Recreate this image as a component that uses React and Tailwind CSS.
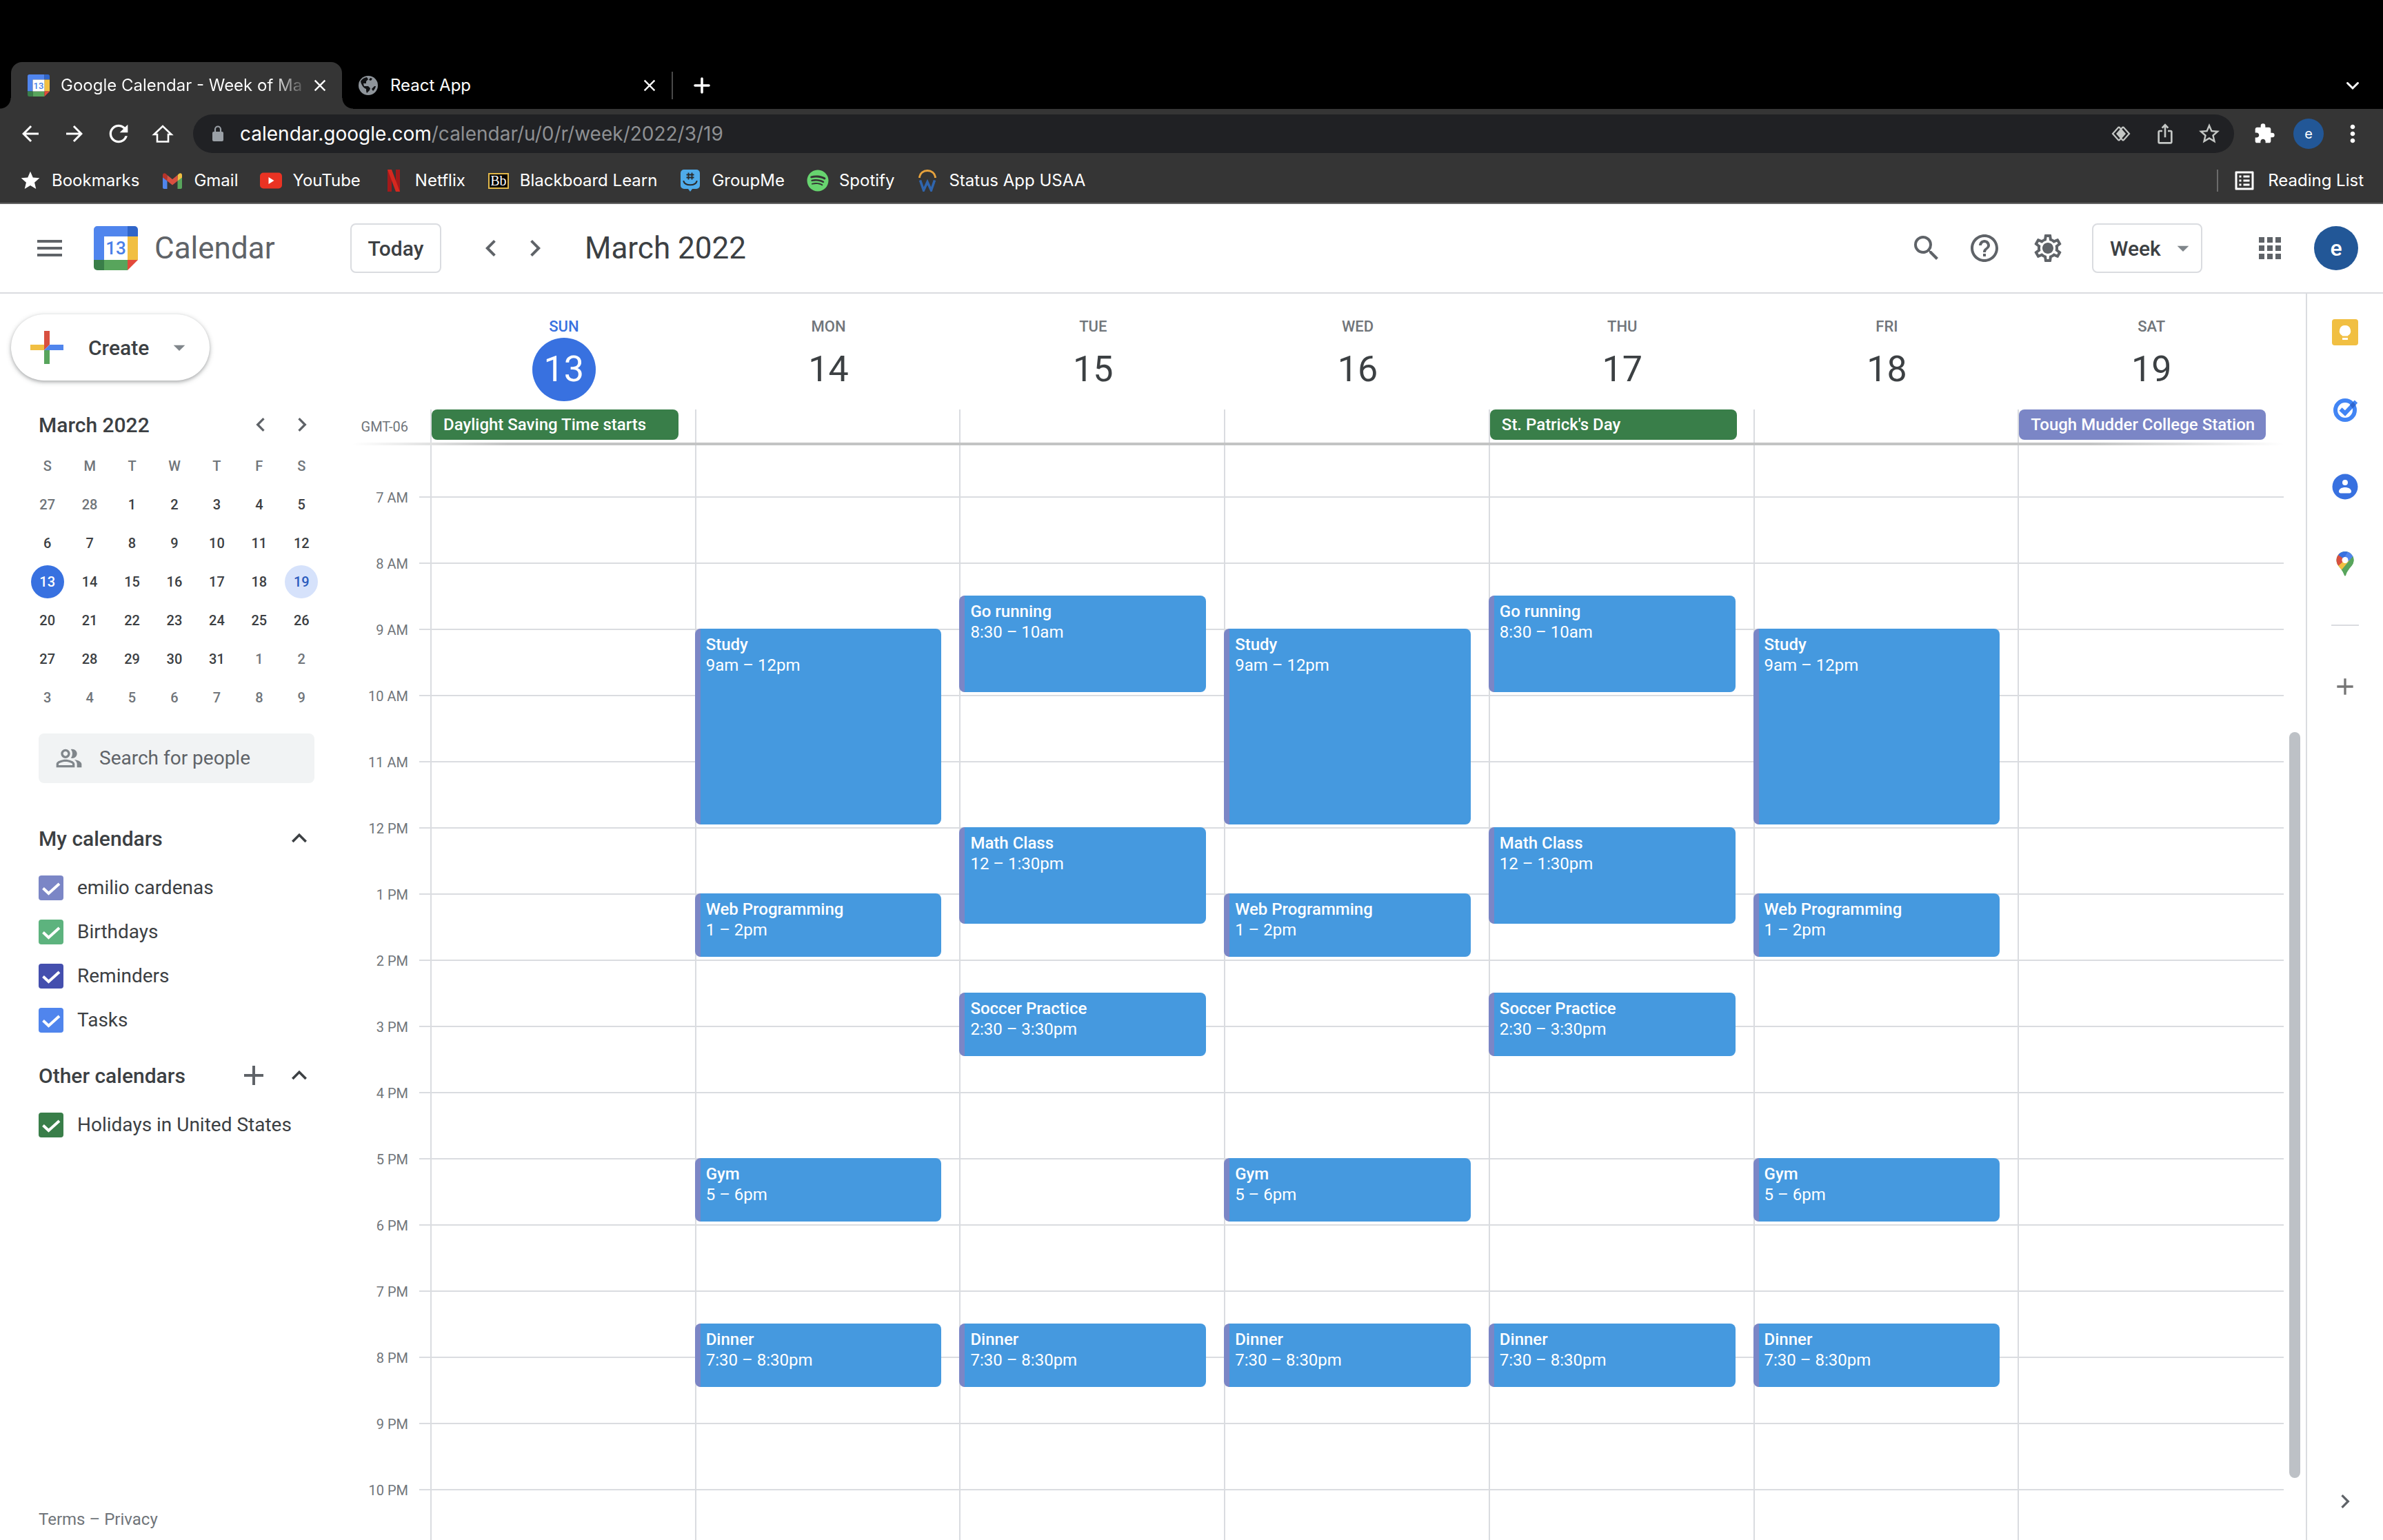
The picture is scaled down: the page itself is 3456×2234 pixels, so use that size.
import React from "react";
import { MdOutlineSettings, MdHelpOutline, MdSearch, MdMenu, MdApps, MdChevronLeft, MdChevronRight, MdExpandLess, MdExpandMore, MdArrowDropDown, MdAdd, MdOutlinePeopleAlt, MdArrowBack, MdArrowForward, MdRefresh, MdStar, MdStarBorder, MdExtension, MdMoreVert, MdClose, MdOutlineIosShare, MdOutlineListAlt } from "react-icons/md";
import { FaSpotify } from "react-icons/fa";

const GmailIcon = () => (
  <svg viewBox="0 0 32 32" className="size-8" aria-hidden="true">
    <path d="M2 8v18a2 2 0 0 0 2 2h4.500V13z" fill="#5086ec" />
    <path d="M30 8v18a2 2 0 0 1-2 2h-4.500V13z" fill="#58a55c" />
    <path d="M23.500 8l2.300-2.200C28 4.200 30 5.700 30 8v3.500l-6.500 5z" fill="#f1bf42" />
    <path d="M8.500 8L6.200 5.800C4 4.200 2 5.700 2 8v3.500l6.500 5z" fill="#b5332a" />
    <path d="M8.500 8l7.500 6 7.500-6v8.500L16 22.500l-7.500-6z" fill="#d85040" />
  </svg>
);
const YouTubeIcon = () => (
  <svg viewBox="0 0 32 32" className="size-8" aria-hidden="true">
    <rect x="0" y="4.500" width="32" height="23" rx="5" fill="#ea3323" />
    <path d="M12.500 11v10l8-5z" fill="#fff" />
  </svg>
);
const NetflixIcon = () => (
  <svg viewBox="0 0 32 32" className="size-8" aria-hidden="true">
    <path d="M7 0h6v32H7z M19 0h6v32h-6z" fill="#a3191a" />
    <path d="M7 0h6l12 32h-6z" fill="#d6281f" />
  </svg>
);
const BlackboardIcon = () => (
  <span className="flex size-8 items-center justify-center" aria-hidden="true">
    <span className="flex h-[23px] w-[30px] items-center justify-center border-2 border-[#e2b84a] bg-black font-['Liberation_Serif',serif] text-[20px] leading-none text-white">Bb</span>
  </span>
);
const GroupMeIcon = () => (
  <svg viewBox="0 0 32 32" className="size-8" aria-hidden="true">
    <path d="M7 0h18a5 5 0 0 1 5 5v18a5 5 0 0 1-5 5h-6l-3 4-3-4H7a5 5 0 0 1-5-5V5a5 5 0 0 1 5-5z" fill="#4fabea" />
    <path d="M13.500 4.500v10M18.500 4.500v10M10.500 7.500h11M10.500 11.500h11" stroke="#2b2b2b" strokeWidth="1.800" fill="none" />
    <path d="M6.500 17c2 7 17 7 19 0" stroke="#2b2b2b" strokeWidth="2.200" fill="none" strokeLinecap="round" />
  </svg>
);
const StatusIcon = () => (
  <svg viewBox="0 0 32 32" className="size-8" fill="none" aria-hidden="true">
    <path d="M4.500 12C5-2 27-2 27.500 12" stroke="#e8a33d" strokeWidth="2.800" />
    <path d="M5.500 15.500l5 14.500L16 18l5.500 12 5-14.500" stroke="#2f65ae" strokeWidth="3.600" />
  </svg>
);
const LensIcon = () => (
  <svg viewBox="0 0 28 24" className="h-6 w-7" fill="none" stroke="#c4c7c5" strokeWidth="2.200" aria-hidden="true">
    <path d="M11 2L2 12l9 10M17 2l9 10-9 10" />
    <path d="M14 4l7 8-7 8-7-8z" fill="#c4c7c5" stroke="none" />
    <path d="M17 2l-3 3.500L11 2M11 22l3-3.500 3 3.500" />
  </svg>
);
const GlobeIcon = () => (
  <svg viewBox="0 0 32 32" className="size-8" aria-hidden="true">
    <circle cx="16" cy="16" r="14" fill="#8f959b" />
    <path d="M5 10c2-3 5-5.500 9-6l2 3-3 3v3H9l1 4h6l3 3-1 3-4 4c-1-2-1-4-1-6-3-1-7-5-8-11z" fill="#101113" />
    <path d="M18 8l4-2c3 2 5 5 5.500 8L24 15l-3-1-1-3-3-1z" fill="#8f959b" />
    <path d="M19 5l3 1-2 3-3-1zM25 17l2 0c-.5 3-2 5-4 7l-2-3z" fill="#101113" />
  </svg>
);
const LockIcon = () => (
  <svg viewBox="0 0 32 32" className="size-8" fill="none" aria-hidden="true">
    <rect x="8" y="13" width="16" height="14" rx="2" fill="#9aa0a6" />
    <path d="M12 13v-3.500a4 4 0 0 1 8 0V13" stroke="#9aa0a6" strokeWidth="2.200" />
  </svg>
);
const HomeIcon = () => (
  <svg viewBox="0 0 32 32" className="size-8" fill="none" stroke="#fff" strokeWidth="2.600" aria-hidden="true">
    <path d="M3.500 17L16 5l12.500 12H24v10.500H8V17z" />
  </svg>
);
const NewTabIcon = () => (
  <svg viewBox="0 0 32 32" className="size-8" fill="none" stroke="#fff" strokeWidth="3.600" strokeLinecap="round" aria-hidden="true">
    <path d="M16 6v20M6 16h20" />
  </svg>
);
const ChevronDown = () => (
  <svg viewBox="0 0 32 32" className="size-8" fill="none" stroke="#fff" strokeWidth="3" strokeLinecap="round" aria-hidden="true">
    <path d="M8.500 12.500l7.500 7.500 7.500-7.500" />
  </svg>
);
const CheckIcon = () => (
  <svg viewBox="0 0 36 36" className="pointer-events-none absolute inset-0 size-9" fill="none" stroke="#fff" strokeWidth="4" aria-hidden="true">
    <path d="M6.500 18.500L14.500 26 30 12" />
  </svg>
);
const GearIcon = () => (
  <svg viewBox="0 0 24 24" className="size-12" fill="currentColor" aria-hidden="true">
    <MdOutlineSettings size={24} />
    <circle cx="12" cy="12" r="3.300" />
  </svg>
);
const CalendarLogo = ({ className }) => (
  <svg viewBox="0 0 64 64" className={className} aria-hidden="true">
    <path d="M5 0h44v15H15v34H0V5a5 5 0 0 1 5-5z" fill="#5085ed" />
    <path d="M49 0h10a5 5 0 0 1 5 5v10H49z" fill="#3065c8" />
    <path d="M49 15h15v34H49z" fill="#f1bf42" />
    <path d="M15 49h34v15H15z" fill="#58a55c" />
    <path d="M0 49h15v15H5a5 5 0 0 1-5-5z" fill="#397e49" />
    <path d="M49 49h15L49 64z" fill="#e3493a" />
    <path d="M15 15h34v34H15z" fill="#fff" />
    <text x="32" y="41" textAnchor="middle" fontSize="26" fontWeight="500" fontFamily="Roboto, sans-serif" fill="#4a80e8">13</text>
  </svg>
);
const CreatePlus = () => (
  <svg viewBox="0 0 48 48" className="size-12" aria-hidden="true">
    <path d="M20 0h8v20l-8 8z" fill="#d85040" />
    <path d="M0 20h20v8H0z" fill="#f1bf42" />
    <path d="M20 28h8v20h-8z" fill="#58a55c" />
    <path d="M28 20h20v8H20z" fill="#5085ed" />
  </svg>
);
const KeepIcon = () => (
  <svg viewBox="0 0 40 40" className="size-10" aria-hidden="true">
    <rect x="1" y="1" width="38" height="38" rx="4" fill="#f1bf42" />
    <path d="M20 10a8 8 0 0 1 4 15v.5h-8V25a8 8 0 0 1 4-15z" fill="#fff" />
    <rect x="16" y="28" width="8" height="3" fill="#fff" />
  </svg>
);
const TasksIcon = () => (
  <svg viewBox="0 0 40 40" className="size-10" fill="none" aria-hidden="true">
    <circle cx="20" cy="21" r="14" stroke="#4285f4" strokeWidth="6" />
    <path d="M13.500 19.500l6.500 6L36 8.500" stroke="#4285f4" strokeWidth="6" />
    <path d="M27 13.500l4.500-4.500 4 4.500-4.500 5z" fill="#2f66cf" />
  </svg>
);
const ContactsIcon = () => (
  <svg viewBox="0 0 40 40" className="size-10" aria-hidden="true">
    <circle cx="20" cy="20" r="18.500" fill="#3871e0" />
    <circle cx="20" cy="14" r="4" fill="#fff" />
    <path d="M11 27c0-8 18-8 18 0 0 1.500-1 2.500-2.500 2.500h-13c-1.500 0-2.500-1-2.500-2.500z" fill="#fff" />
  </svg>
);
const MapsIcon = () => (
  <svg viewBox="0 0 40 40" className="size-10" aria-hidden="true">
    <clipPath id="pin"><path d="M20 2a12.500 12.500 0 0 1 12.500 12.500c0 6-3.500 9-7 13.500-3 4-3.500 6-4.300 8.500-.4 1.400-2 1.400-2.400 0-.8-2.500-1.300-4.500-4.300-8.500-3.500-4.500-7-7.500-7-13.500A12.500 12.500 0 0 1 20 2z" /></clipPath>
    <g clipPath="url(#pin)">
      <path d="M0 0h40v40H0z" fill="#58a55c" />
      <path d="M6 23L20 6l8 8L13 32z" fill="#f1bf42" />
      <path d="M4 24V4h7l9 10-10 9z" fill="#d85040" />
      <path d="M10 7l4-7h14l-8 14z" fill="#3871e0" />
      <path d="M25 1l10 6-3 4-12 8-2-7z" fill="#5085ed" />
      <path d="M34 6v12L15 38l-2-7 20-24z" fill="#58a55c" />
      <path d="M20 14L13 30l-2-3 9-10z" fill="#f1bf42" />
    </g>
    <circle cx="20" cy="14.500" r="4.500" fill="#fff" />
  </svg>
);

const bookmarks = [
  ["Bookmarks", <MdStar key="i" className="size-8 text-white" />],
  ["Gmail", <GmailIcon key="i" />],
  ["YouTube", <YouTubeIcon key="i" />],
  ["Netflix", <NetflixIcon key="i" />],
  ["Blackboard Learn", <BlackboardIcon key="i" />],
  ["GroupMe", <GroupMeIcon key="i" />],
  ["Spotify", <FaSpotify key="i" className="size-8 text-[#67d46f]" />],
  ["Status App USAA", <StatusIcon key="i" />],
];

const weeks = [
  [27, 28, 1, 2, 3, 4, 5],
  [6, 7, 8, 9, 10, 11, 12],
  [13, 14, 15, 16, 17, 18, 19],
  [20, 21, 22, 23, 24, 25, 26],
  [27, 28, 29, 30, 31, 1, 2],
  [3, 4, 5, 6, 7, 8, 9],
];

const mwf = [
  ["Study", "9am – 12pm", 9, 12],
  ["Web Programming", "1 – 2pm", 13, 14],
  ["Gym", "5 – 6pm", 17, 18],
  ["Dinner", "7:30 – 8:30pm", 19.5, 20.5],
];
const tth = [
  ["Go running", "8:30 – 10am", 8.5, 10],
  ["Math Class", "12 – 1:30pm", 12, 13.5],
  ["Soccer Practice", "2:30 – 3:30pm", 14.5, 15.5],
  ["Dinner", "7:30 – 8:30pm", 19.5, 20.5],
];
const days = [
  { name: "SUN", date: 13, today: true, allDay: "Daylight Saving Time starts", color: "bg-[#397e49]", events: [] },
  { name: "MON", date: 14, events: mwf },
  { name: "TUE", date: 15, events: tth },
  { name: "WED", date: 16, events: mwf },
  { name: "THU", date: 17, allDay: "St. Patrick's Day", color: "bg-[#397e49]", events: tth },
  { name: "FRI", date: 18, events: mwf },
  { name: "SAT", date: 19, allDay: "Tough Mudder College Station", color: "bg-[#7b86c6]", events: [] },
];
const hours = ["7 AM", "8 AM", "9 AM", "10 AM", "11 AM", "12 PM", "1 PM", "2 PM", "3 PM", "4 PM", "5 PM", "6 PM", "7 PM", "8 PM", "9 PM", "10 PM"];
const HOUR = 96;
const FIRST = 74;

function IconButton({ label, children, className = "size-16" }) {
  return (
    <button type="button" aria-label={label} className={`flex shrink-0 items-center justify-center ${className}`}>
      {children}
    </button>
  );
}

function Browser() {
  return (
    <div className="bg-[#353535] font-[Inter,sans-serif] text-white">
      <div className="flex h-[158px] items-end bg-black pl-4">
        <div className="relative flex h-[68px] w-[480px] items-center rounded-t-2xl bg-[#353535] pr-4 pl-6">
          <span className="absolute bottom-0 -left-4 size-4 bg-[radial-gradient(circle_at_0_0,#000_15px,#353535_16px)]" />
          <span className="absolute -right-4 bottom-0 size-4 bg-[radial-gradient(circle_at_100%_0,#000_15px,#353535_16px)]" />
          <CalendarLogo className="size-8 shrink-0" />
          <span className="ml-4 flex-1 bg-linear-to-r from-white from-85% to-transparent bg-clip-text text-[24px] whitespace-nowrap text-transparent">Google Calendar - Week of Ma</span>
          <IconButton label="Close tab" className="size-8"><MdClose className="size-7" /></IconButton>
        </div>
        <div className="flex h-[68px] w-[478px] items-center pr-4 pl-[22px]">
          <GlobeIcon />
          <span className="ml-4 flex-1 text-[24px]">React App</span>
          <IconButton label="Close tab" className="size-8"><MdClose className="size-7" /></IconButton>
        </div>
        <div className="flex h-[68px] flex-1 items-center justify-between pr-7">
          <div className="flex h-10 items-center border-l-2 border-[#4a4a4a] pl-[26px]">
            <IconButton label="New tab" className="size-8"><NewTabIcon /></IconButton>
          </div>
          <IconButton label="Search tabs" className="size-8"><ChevronDown /></IconButton>
        </div>
      </div>
      <div className="flex h-[72px] items-center px-7">
        <div className="flex gap-8 pr-7">
          <IconButton label="Back" className="size-8"><MdArrowBack className="size-9 shrink-0" /></IconButton>
          <IconButton label="Forward" className="size-8"><MdArrowForward className="size-9 shrink-0" /></IconButton>
          <IconButton label="Reload" className="size-8"><MdRefresh className="size-10 shrink-0" /></IconButton>
          <IconButton label="Home" className="size-8"><HomeIcon /></IconButton>
        </div>
        <div className="flex h-14 flex-1 items-center rounded-full bg-[#202124] px-5">
          <LockIcon />
          <div className="ml-4 flex-1 text-[28px] text-[#8e9093]"><span className="text-white">calendar.google.com</span>/calendar/u/0/r/week/2022/3/19</div>
          <div className="flex gap-8 text-[#c4c7c5]">
            <IconButton label="Lens" className="size-8"><LensIcon /></IconButton>
            <IconButton label="Share" className="size-8"><MdOutlineIosShare className="size-8" /></IconButton>
            <IconButton label="Bookmark this page" className="size-8"><MdStarBorder className="size-9 shrink-0" /></IconButton>
          </div>
        </div>
        <div className="flex items-center gap-6.5 pl-7">
          <IconButton label="Extensions" className="size-8"><MdExtension className="size-8" /></IconButton>
          <button type="button" aria-label="Profile" className="flex size-11 items-center justify-center rounded-full bg-[#225797] text-[20px]">e</button>
          <IconButton label="Menu" className="size-8"><MdMoreVert className="size-10 shrink-0" /></IconButton>
        </div>
      </div>
      <div className="flex h-[66px] items-center gap-8 border-b-2 border-[#636363] px-7 text-[24px]">
        {bookmarks.map(([name, icon]) => (
          <a key={name} href="#" className="flex items-center gap-[15px]">{icon}{name}</a>
        ))}
        <button type="button" className="ml-auto flex h-8 items-center gap-4 border-l-2 border-[#6b6b6b] pl-5">
          <MdOutlineListAlt className="size-9" />Reading List
        </button>
      </div>
    </div>
  );
}

function Header() {
  return (
    <header className="flex h-[130px] items-center border-b-2 border-[#dadce0] pr-9 pl-12 text-[#5f6368]">
      <IconButton label="Main menu" className="size-12"><MdMenu className="size-12" /></IconButton>
      <CalendarLogo className="ml-10 size-16" />
      <span className="w-[308px] pl-6 text-[44px]">Calendar</span>
      <button type="button" className="h-[72px] w-[132px] rounded-lg border-2 border-[#dadce0] text-[30px] font-medium text-[#3c4043]">Today</button>
      <div className="ml-10 flex">
        <IconButton label="Previous week"><MdChevronLeft className="size-12" /></IconButton>
        <IconButton label="Next week"><MdChevronRight className="size-12" /></IconButton>
      </div>
      <h1 className="ml-10 flex-1 text-[44px] text-[#3c4043]">March 2022</h1>
      <div className="flex items-center">
        <IconButton label="Search"><MdSearch className="size-12" /></IconButton>
        <IconButton label="Support" className="ml-5 size-16"><MdHelpOutline className="size-12" /></IconButton>
        <IconButton label="Settings" className="ml-7 size-16"><GearIcon /></IconButton>
      </div>
      <div className="relative ml-8 flex items-center">
        <select aria-label="View" defaultValue="Week" className="h-[72px] w-[160px] appearance-none rounded-lg border-2 border-[#dadce0] bg-white pl-6 text-[30px] font-medium text-[#3c4043]">
          <option>Week</option>
        </select>
        <MdArrowDropDown className="pointer-events-none absolute right-2 size-10 text-[#80868b]" />
      </div>
      <IconButton label="Google apps" className="ml-[66px] size-16"><MdApps className="size-12" /></IconButton>
      <button type="button" aria-label="Account" className="ml-8 flex size-16 items-center justify-center rounded-full bg-[#225797] text-[32px] font-medium text-white">e</button>
    </header>
  );
}

function Check({ label, color }) {
  return (
    <label className="flex h-16 items-center gap-5 text-[28px]">
      <span className="relative flex size-9">
        <input type="checkbox" defaultChecked className={`size-9 appearance-none rounded ${color}`} />
        <CheckIcon />
      </span>
      {label}
    </label>
  );
}

function Sidebar() {
  return (
    <aside className="flex w-[512px] shrink-0 flex-col text-[#3c4043]">
      <button type="button" className="mt-[30px] ml-4 flex h-24 w-[288px] items-center rounded-full pl-7 text-[30px] font-medium shadow-[0_2px_4px_rgba(60,64,67,0.3),0_2px_6px_2px_rgba(60,64,67,0.15)]">
        <CreatePlus />
        <span className="ml-9">Create</span>
        <MdArrowDropDown className="mr-6 ml-auto size-10 text-[#80868b]" />
      </button>
      <div className="mt-8 flex h-16 items-center pr-11 pl-14">
        <h2 className="flex-1 text-[30px] font-medium">March 2022</h2>
        <div className="flex text-[#5f6368]">
          <IconButton label="Previous month" className="h-16 w-15"><MdChevronLeft className="size-10" /></IconButton>
          <IconButton label="Next month" className="h-16 w-15"><MdChevronRight className="size-10" /></IconButton>
        </div>
      </div>
      <table className="ml-[38px] w-[430px] table-fixed text-center text-[20px] font-medium">
        <thead>
          <tr className="text-[#70757a]">
            {["S", "M", "T", "W", "T", "F", "S"].map((d, i) => <th key={i} scope="col" className="h-14 font-medium">{d}</th>)}
          </tr>
        </thead>
        <tbody>
          {weeks.map((w, r) => (
            <tr key={r}>
              {w.map((d, c) => {
                const other = (r === 0 && d > 7) || (r > 3 && d < 20);
                const look = r === 2 && c === 0 ? "bg-[#3871e0] text-white" : r === 2 && c === 6 ? "bg-[#d6e2fb] text-[#2b5bbd]" : other ? "text-[#70757a]" : "";
                return <td key={c} className="h-14"><span className={`mx-auto flex size-12 items-center justify-center rounded-full ${look}`}>{d}</span></td>;
              })}
            </tr>
          ))}
        </tbody>
      </table>
      <label className="mt-6 ml-14 flex h-[72px] w-[400px] items-center rounded-lg bg-[#f1f3f4] pl-6">
        <MdOutlinePeopleAlt className="size-10 text-[#80868b]" />
        <input type="text" aria-label="Search for people" placeholder="Search for people" className="ml-6 w-[260px] bg-transparent text-[28px] placeholder:text-[#5f6368]" />
      </label>
      <div className="mt-12 flex h-16 items-center pr-14 pl-14">
        <h3 className="flex-1 text-[30px] font-medium">My calendars</h3>
        <IconButton label="Collapse my calendars" className="size-11"><MdExpandLess className="size-11" /></IconButton>
      </div>
      <div className="mt-2 pl-14">
        <Check label="emilio cardenas" color="bg-[#7b86c6]" />
        <Check label="Birthdays" color="bg-[#5db37e]" />
        <Check label="Reminders" color="bg-[#444fae]" />
        <Check label="Tasks" color="bg-[#5085ed]" />
      </div>
      <div className="mt-4 flex h-16 items-center pr-14 pl-14">
        <h3 className="flex-1 text-[30px] font-medium">Other calendars</h3>
        <IconButton label="Add other calendars" className="mr-6 size-10 text-[#5f6368]"><MdAdd className="size-12 shrink-0" /></IconButton>
        <IconButton label="Collapse other calendars" className="size-11"><MdExpandLess className="size-11" /></IconButton>
      </div>
      <div className="mt-2 pl-14">
        <Check label="Holidays in United States" color="bg-[#397e49]" />
      </div>
      <div className="mt-auto flex gap-1.5 pb-3 pl-14 text-[24px] text-[#70757a]">
        <a href="#">Terms</a>–<a href="#">Privacy</a>
      </div>
    </aside>
  );
}

function Week() {
  return (
    <main className="flex flex-1 flex-col">
      <div className="flex pr-[34px]">
        <div className="flex w-28 items-end justify-end pr-8 pb-2 text-[20px] text-[#70757a]">GMT-06</div>
        <div className="grid flex-1 grid-cols-7">
          {days.map((d) => (
            <div key={d.name}>
              <div className={`flex flex-col items-center pt-9 pl-1 ${d.today ? "text-[#3871e0]" : "text-[#70757a]"}`}>
                <span className="text-[22px] leading-6 font-medium">{d.name}</span>
                <span className={`mt-1 mb-3 flex size-[92px] items-center justify-center rounded-full text-[52px] ${d.today ? "bg-[#3871e0] text-white" : "text-[#3c4043]"}`}>{d.date}</span>
              </div>
              <div className="h-12 border-l-2 border-[#dadce0] pr-6">
                {d.allDay && <button type="button" className={`flex h-11 w-full items-center rounded-lg pl-[17px] text-[24px] font-medium whitespace-nowrap text-white ${d.color}`}>{d.allDay}</button>}
              </div>
            </div>
          ))}
        </div>
      </div>
      <div className="mr-8 h-1 bg-[linear-gradient(to_right,transparent,#c3c4c4_8%,#c3c4c4_90%,transparent)]" />
      <div className="flex flex-1">
        <div className="w-24 pr-4 text-right text-[20px] text-[#70757a]">
          <div className="h-7" />
          {hours.map((h) => <div key={h} className="flex h-24 items-center justify-end">{h}</div>)}
        </div>
        <div className="flex flex-1 bg-[linear-gradient(#dadce0_2px,transparent_2px)] bg-[length:100%_96px] bg-[position:0_74px] pl-4">
          <div className="mr-0.5 grid flex-1 grid-cols-7">
            {days.map((d) => (
              <div key={d.name} className="relative border-l-2 border-[#dadce0]">
                {d.events.map(([title, time, from, to]) => (
                  <button
                    type="button"
                    key={title}
                    className="absolute right-[26px] -left-0.5 flex flex-col items-start overflow-hidden rounded-lg border-l-8 border-[#7b86c6] bg-[#4599df] pt-2 pl-2 text-[24px] leading-[30px] text-white"
                    style={{ top: FIRST + (from - 7) * HOUR, height: (to - from) * HOUR - 4 }}
                  >
                    <span className="font-medium">{title}</span>
                    <span>{time}</span>
                  </button>
                ))}
              </div>
            ))}
          </div>
        </div>
        <div className="w-8 pt-[416px] pl-2"><div className="h-[1082px] w-4 rounded-full bg-[#bdc1c6]" /></div>
      </div>
    </main>
  );
}

function SidePanel() {
  return (
    <aside className="flex w-28 shrink-0 flex-col items-center border-l-2 border-[#dadce0] pt-6">
      <div className="flex flex-col gap-12">
        <IconButton label="Keep"><KeepIcon /></IconButton>
        <IconButton label="Tasks"><TasksIcon /></IconButton>
        <IconButton label="Contacts"><ContactsIcon /></IconButton>
        <IconButton label="Maps"><MapsIcon /></IconButton>
      </div>
      <div className="my-14 h-0.5 w-10 bg-[#dadce0]" />
      <IconButton label="Get add-ons" className="size-16 text-[#757575]"><MdAdd className="size-10" /></IconButton>
      <IconButton label="Hide side panel" className="mt-auto mb-6 size-16 text-[#5f6368]"><MdChevronRight className="size-10" /></IconButton>
    </aside>
  );
}

export default function App() {
  return (
    <div className="flex min-h-screen flex-col bg-white font-[Roboto,sans-serif]">
      <Browser />
      <Header />
      <div className="flex flex-1">
        <Sidebar />
        <Week />
        <SidePanel />
      </div>
    </div>
  );
}
